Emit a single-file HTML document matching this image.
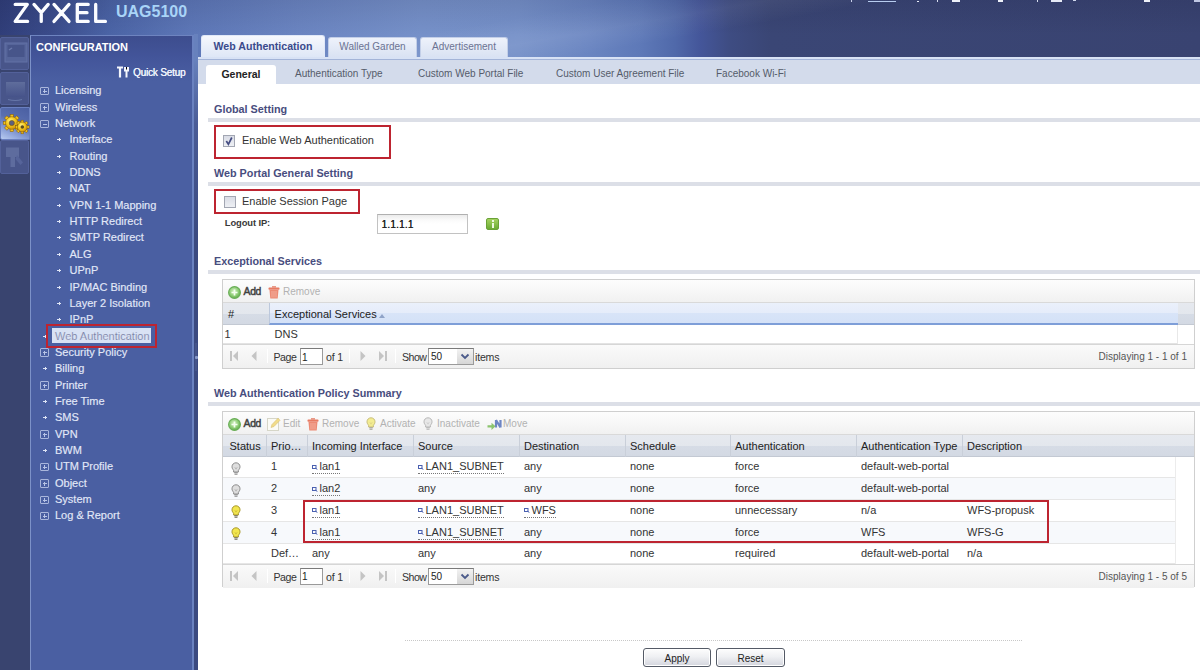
<!DOCTYPE html>
<html><head><meta charset="utf-8">
<style>
*{box-sizing:border-box}
html,body{margin:0;padding:0}
body{width:1200px;height:670px;overflow:hidden;position:relative;font-family:"Liberation Sans",sans-serif;background:#3a4572}
.a{position:absolute;white-space:nowrap}
.a svg{display:block}
#hdr{position:absolute;left:0;top:0;width:1200px;height:60px;background:linear-gradient(90deg,#303e79 0px,#3a4b8a 50px,#4b64a6 110px,#5d77b7 190px,#6b85c1 300px,#7691c9 420px,#7590c8 520px,#6a85c1 590px,#5e79b8 640px,#5069aa 675px,#44569a 700px,#3e4c82 730px,#3a4675 770px,#394371 1200px)}
#hdrs{position:absolute;left:0;top:0;width:1200px;height:60px;background:linear-gradient(180deg,rgba(10,10,40,0.10) 0px,rgba(10,10,40,0) 35px),linear-gradient(170deg,rgba(255,255,255,0) 40%,rgba(255,255,255,0.07) 50%,rgba(255,255,255,0) 58%)}
#logo{left:13px;top:-1px;color:#fff;font-size:26px;font-weight:bold;letter-spacing:3px}
#model{left:116px;top:3px;color:#a9d4f7;font-size:16px;font-weight:bold}
#strip{position:absolute;left:0;top:35px;width:30px;height:635px;background:#39446f}
.tile{position:absolute;left:0px;width:29px;height:33px;background:#48558a;border:1px solid #53619a;border-radius:2px}
#side{position:absolute;left:30px;top:35px;width:164px;height:635px;background:linear-gradient(#3d4d8e 0px,#43559a 22px,#4a5fa2 45px,#4a5fa2 100%);border-left:1px solid #7d92c8;border-top:1px solid #6e84c0;border-right:2px solid #6a82c0}
#sidebr{display:none}
#sidedk{position:absolute;left:194px;top:34px;width:4px;height:636px;background:linear-gradient(#6781bd 0px,#6781bd 25px,#4a5c96 90px,#3b4a80 200px,#3b4a80 100%)}
#cfg{left:36px;top:41px;color:#fff;font-size:11px;font-weight:bold}
.nav{position:absolute;left:0;color:#e2e8f8;font-size:11px;-webkit-text-stroke:0.15px #e2e8f8;white-space:nowrap;height:16px;line-height:16px}
.nav .bx{position:absolute;left:10px;top:4.5px;width:8.5px;height:8.5px;border:1px solid #a9b6dc;border-radius:1px}
.nav .bx:before{content:"";position:absolute;left:1.5px;top:3px;width:4px;height:1px;background:#b8c4e6}
.nav .bx.p:after{content:"";position:absolute;left:3px;top:1.5px;width:1px;height:4px;background:#b8c4e6}
.nav .dot{position:absolute;top:8px;width:4px;height:1px;background:#dfe5f6}
.nav .dot:after{content:"";position:absolute;left:2px;top:-1px;width:1px;height:3px;background:#dfe5f6}
#main{position:absolute;left:198px;top:57px;width:1002px;height:613px;background:#fff}
#subbar{position:absolute;left:198px;top:57px;width:1002px;height:27px;background:linear-gradient(#d8e2f5 0px,#d8e2f5 1.5px,#a3b4d8 1.5px,#a3b4d8 2.5px,#d3dbeb 2.5px)}
.tab{position:absolute;top:37px;height:20px;border-radius:3px 3px 0 0;background:linear-gradient(#eef2fb,#d9e2f3);border:1px solid #c3cfe8;border-bottom:none;font-size:10px;color:#6b7392;text-align:center;line-height:17px}
.tab.on{top:35px;height:23px;background:linear-gradient(#f6f8fd,#dde6f6);color:#3a4a8c;font-weight:bold;font-size:10.6px;border-color:#e0e8f8;line-height:20px}
.stab{position:absolute;top:74px;font-size:10px;color:#555b6a}
#gen{position:absolute;left:206px;top:64.5px;width:70px;height:19.5px;background:#fff;border-radius:3px 3px 0 0;font-size:10.5px;font-weight:bold;color:#222;text-align:center;line-height:19px}
.sec{position:absolute;left:214px;font-size:10.8px;font-weight:bold;color:#484d7e}
.div{position:absolute;left:208px;width:992px;height:4px;background:#dcdfe7}
.red{position:absolute;border:2.8px solid #bd2430}
.cb{position:absolute;width:12px;height:12px;border:1px solid #a2a6b2;background:linear-gradient(#d9dce6,#eef0f4)}
.t11{font-size:11px;color:#333}
.gp{position:absolute;border:1px solid #cfcfcf;background:#fff}
.tb{position:absolute;background:linear-gradient(#fdfdfd,#f1f1f1);border-bottom:1px solid #d9d9d9}
.hd{position:absolute;background:linear-gradient(#e6e9ef 0%,#e3e7ed 50%,#d6dce6 51%,#d3d9e3 100%);border-bottom:1px solid #c3c9d3}
.hdsort{position:absolute;background:linear-gradient(#eaf0fb 0%,#e5ecfa 50%,#d8e4f8 51%,#d4e1f7 100%);border-bottom:2px solid #7e9ed8;border-left:1px solid #bcc8dc}
.pg{position:absolute;background:linear-gradient(#fafafa,#f0f0f0);border-top:1px solid #d6d6d6}
.pin{position:absolute;border:1px solid #9a9a9a;background:#fff;border-top-color:#7a7a7a}
.psep{position:absolute;width:1px;height:14px;background:#d0d0d0;border-right:1px solid #fff}
.btn{position:absolute;border:1px solid #545a66;border-radius:3px;background:linear-gradient(#fdfdfd 0%,#eff0f3 45%,#d3d5dd 100%);font-size:10px;color:#222;text-align:center;line-height:19px;box-shadow:inset 0 0 0 1px #fff}
</style></head><body>
<div id="hdr"></div><div id="hdrs"></div>
<svg class="a" style="left:0;top:0" width="112" height="28" viewBox="0 0 112 28"><path d="M15.2 4.4H27.3L15.2 21.4H27.6M34 4.4L41.25 12.6L48.2 4.4M41.25 12.6V21.4M54 4.4L69 21.4M69 4.4L54 21.4M77.3 4.4V21.4M77.3 4.4H88.2M77.3 12.7H87M77.3 21.4H88.2M95.7 4.4V21.4H105.4" fill="none" stroke="#fbfcff" stroke-width="3.3" stroke-linecap="round" stroke-linejoin="round"/></svg>
<div class="a" id="model">UAG5100</div>

<div id="strip"></div>
<div class="a" style="left:851px;top:0;width:1px;height:2px;background:#c8d0ea"></div>
<div class="a" style="left:868px;top:1px;width:28px;height:1px;background:#b8cdf0"></div>
<div class="a" style="left:917px;top:1px;width:2px;height:1px;background:#e8ecf8"></div>
<div class="a" style="left:937px;top:0;width:1px;height:2px;background:#d8def0"></div>
<div class="a" style="left:952px;top:0;width:8px;height:2px;background:#eef1f9"></div>
<div class="a" style="left:998px;top:0;width:5px;height:2px;background:#eef1f9"></div>
<div class="a" style="left:1037px;top:0;width:1px;height:2px;background:#d8def0"></div>
<div class="a" style="left:1051px;top:0;width:11px;height:2px;background:#e6eaf6"></div>
<div class="a" style="left:1073px;top:0;width:3px;height:1px;background:#d0d8ee"></div>
<div class="a" style="left:1144px;top:0;width:6px;height:2px;background:#eef1f9"></div>
<div class="a" style="left:1194px;top:0;width:6px;height:2px;background:#c0c8e4"></div>
<div class="tile" style="top:37px"><svg width="28" height="33" viewBox="0 0 28 33" style="display:block"><rect x="4" y="5" width="22" height="19" fill="#56659a" stroke="#6272a6"/><rect x="6.5" y="7" width="17" height="12" fill="#47558a"/><path d="M8 12l3-2" stroke="#6a79ab" stroke-width="1.5"/></svg></div>
<div class="tile" style="top:72px"><svg width="28" height="33" viewBox="0 0 28 33" style="display:block"><defs><linearGradient id="tb2" x1="0" y1="0" x2="0" y2="1"><stop offset="0" stop-color="#5f6d9c"/><stop offset="1" stop-color="#46538a"/></linearGradient></defs><rect x="5" y="9" width="19" height="15" fill="url(#tb2)"/><path d="M7 26.5q7.5 2 14 0" stroke="#6676a8" stroke-width="1.2" fill="none"/></svg></div>
<div class="tile" style="top:107px;height:33px;width:30px;background:linear-gradient(25deg,#b8cbf0 0%,#8aa0d8 25%,#5a6fb0 55%,#4a5fa2 100%);border-radius:2px 0 0 2px;border-color:#6a80c0"><svg width="30" height="33" viewBox="0 0 30 33" style="display:block">
<defs><radialGradient id="gg" cx="40%" cy="35%" r="70%"><stop offset="0" stop-color="#fff48a"/><stop offset="0.5" stop-color="#f4c81c"/><stop offset="1" stop-color="#c98a0c"/></radialGradient></defs>
<g transform="translate(10.8,15)"><g fill="#f2c21c" stroke="#7a5208" stroke-width="0.5">
<rect x="-1.7" y="-8.6" width="3.4" height="3.6"/><rect x="-1.7" y="5" width="3.4" height="3.6"/><rect x="-8.6" y="-1.7" width="3.6" height="3.4"/><rect x="5" y="-1.7" width="3.6" height="3.4"/>
<g transform="rotate(45)"><rect x="-1.7" y="-8.6" width="3.4" height="3.6"/><rect x="-1.7" y="5" width="3.4" height="3.6"/><rect x="-8.6" y="-1.7" width="3.6" height="3.4"/><rect x="5" y="-1.7" width="3.6" height="3.4"/></g></g>
<circle r="6.3" fill="url(#gg)" stroke="#7a5208" stroke-width="0.5"/><circle r="2.6" fill="#5c6080" stroke="#7a5208" stroke-width="0.6"/></g>
<g transform="translate(21.3,19)"><g fill="#f2c21c" stroke="#7a5208" stroke-width="0.5">
<rect x="-1.3" y="-6.8" width="2.6" height="3"/><rect x="-1.3" y="3.8" width="2.6" height="3"/><rect x="-6.8" y="-1.3" width="3" height="2.6"/><rect x="3.8" y="-1.3" width="3" height="2.6"/>
<g transform="rotate(45)"><rect x="-1.3" y="-6.8" width="2.6" height="3"/><rect x="-1.3" y="3.8" width="2.6" height="3"/><rect x="-6.8" y="-1.3" width="3" height="2.6"/><rect x="3.8" y="-1.3" width="3" height="2.6"/></g></g>
<circle r="4.9" fill="url(#gg)" stroke="#7a5208" stroke-width="0.5"/><circle r="1.8" fill="#5a4a20"/></g>
</svg></div>
<div class="tile" style="top:140px;height:34px"><svg width="28" height="34" viewBox="0 0 28 34" style="display:block"><path d="M5 6.5h13v9.5h-4v10h-4.5v-10H5z" fill="#5e6c9e"/><path d="M16 14l6 7.5-2.5 2.5-5-6z" fill="#56649a"/></svg></div>
<div id="side"></div>
<div id="sidebr"></div>
<div id="sidedk"></div>
<div class="a" style="left:195px;top:343px;width:2px;height:28px;background:#45548a"></div>
<div class="a" style="left:195px;top:356px;width:2.5px;height:3px;border-radius:1px;background:#8a9ccc"></div>
<div class="a" id="cfg">CONFIGURATION</div>
<svg class="a" style="left:116px;top:66px" width="14" height="13" viewBox="0 0 14 13"><path d="M1 1.5h6M4 1.5v10" stroke="#f4f6fc" stroke-width="2.2"/><path d="M9 1v3.5h3V1M10.5 4.5v7" stroke="#f4f6fc" stroke-width="2"/></svg>
<div class="a" style="left:133px;top:67.5px;color:#eef2fb;font-size:10px;line-height:1;letter-spacing:-0.2px;text-shadow:0.35px 0 0 #eef2fb">Quick Setup</div>

<div class="nav" style="left:30px;top:82.30px;width:160px"><span style="position:absolute;left:25px;">Licensing</span><span class="bx p"></span></div>
<div class="nav" style="left:30px;top:98.65px;width:160px"><span style="position:absolute;left:25px;">Wireless</span><span class="bx p"></span></div>
<div class="nav" style="left:30px;top:115.00px;width:160px"><span style="position:absolute;left:25px;">Network</span><span class="bx "></span></div>
<div class="nav" style="left:30px;top:131.35px;width:160px"><span style="position:absolute;left:39.5px;">Interface</span><span class="dot" style="left:27px"></span></div>
<div class="nav" style="left:30px;top:147.70px;width:160px"><span style="position:absolute;left:39.5px;">Routing</span><span class="dot" style="left:27px"></span></div>
<div class="nav" style="left:30px;top:164.05px;width:160px"><span style="position:absolute;left:39.5px;">DDNS</span><span class="dot" style="left:27px"></span></div>
<div class="nav" style="left:30px;top:180.40px;width:160px"><span style="position:absolute;left:39.5px;">NAT</span><span class="dot" style="left:27px"></span></div>
<div class="nav" style="left:30px;top:196.75px;width:160px"><span style="position:absolute;left:39.5px;">VPN 1-1 Mapping</span><span class="dot" style="left:27px"></span></div>
<div class="nav" style="left:30px;top:213.10px;width:160px"><span style="position:absolute;left:39.5px;">HTTP Redirect</span><span class="dot" style="left:27px"></span></div>
<div class="nav" style="left:30px;top:229.45px;width:160px"><span style="position:absolute;left:39.5px;">SMTP Redirect</span><span class="dot" style="left:27px"></span></div>
<div class="nav" style="left:30px;top:245.80px;width:160px"><span style="position:absolute;left:39.5px;">ALG</span><span class="dot" style="left:27px"></span></div>
<div class="nav" style="left:30px;top:262.15px;width:160px"><span style="position:absolute;left:39.5px;">UPnP</span><span class="dot" style="left:27px"></span></div>
<div class="nav" style="left:30px;top:278.50px;width:160px"><span style="position:absolute;left:39.5px;">IP/MAC Binding</span><span class="dot" style="left:27px"></span></div>
<div class="nav" style="left:30px;top:294.85px;width:160px"><span style="position:absolute;left:39.5px;">Layer 2 Isolation</span><span class="dot" style="left:27px"></span></div>
<div class="nav" style="left:30px;top:311.20px;width:160px"><span style="position:absolute;left:39.5px;">IPnP</span><span class="dot" style="left:27px"></span></div>
<div class="a" style="left:51.6px;top:327.85px;width:99px;height:15px;background:#d9e2f4"></div>
<div class="nav" style="left:30px;top:327.55px;width:160px"><span style="position:absolute;left:25px;color:#7880a4;">Web Authentication</span><span class="dot" style="left:13px"></span></div>
<div class="nav" style="left:30px;top:343.90px;width:160px"><span style="position:absolute;left:25px;">Security Policy</span><span class="bx p"></span></div>
<div class="nav" style="left:30px;top:360.25px;width:160px"><span style="position:absolute;left:25px;">Billing</span><span class="dot" style="left:13px"></span></div>
<div class="nav" style="left:30px;top:376.60px;width:160px"><span style="position:absolute;left:25px;">Printer</span><span class="bx p"></span></div>
<div class="nav" style="left:30px;top:392.95px;width:160px"><span style="position:absolute;left:25px;">Free Time</span><span class="dot" style="left:13px"></span></div>
<div class="nav" style="left:30px;top:409.30px;width:160px"><span style="position:absolute;left:25px;">SMS</span><span class="dot" style="left:13px"></span></div>
<div class="nav" style="left:30px;top:425.65px;width:160px"><span style="position:absolute;left:25px;">VPN</span><span class="bx p"></span></div>
<div class="nav" style="left:30px;top:442.00px;width:160px"><span style="position:absolute;left:25px;">BWM</span><span class="dot" style="left:13px"></span></div>
<div class="nav" style="left:30px;top:458.35px;width:160px"><span style="position:absolute;left:25px;">UTM Profile</span><span class="bx p"></span></div>
<div class="nav" style="left:30px;top:474.70px;width:160px"><span style="position:absolute;left:25px;">Object</span><span class="bx p"></span></div>
<div class="nav" style="left:30px;top:491.05px;width:160px"><span style="position:absolute;left:25px;">System</span><span class="bx p"></span></div>
<div class="nav" style="left:30px;top:507.40px;width:160px"><span style="position:absolute;left:25px;">Log &amp; Report</span><span class="bx p"></span></div>

<div class="red" style="left:46px;top:324px;width:111px;height:24px"></div>

<div id="main"></div>
<div class="tab on" style="left:201px;width:124px">Web Authentication</div>
<div class="tab" style="left:328px;width:89px">Walled Garden</div>
<div class="tab" style="left:420px;width:88px">Advertisement</div>
<div id="subbar"></div>
<div id="gen">General</div>
<div class="stab" style="left:295px;top:68px">Authentication Type</div>
<div class="stab" style="left:418px;top:68px">Custom Web Portal File</div>
<div class="stab" style="left:556px;top:68px">Custom User Agreement File</div>
<div class="stab" style="left:716px;top:68px">Facebook Wi-Fi</div>

<div class="sec" style="top:103px">Global Setting</div>
<div class="div" style="top:117.5px"></div>
<div class="red" style="left:214px;top:124.5px;width:177px;height:34.5px"></div>
<div class="cb" style="left:223px;top:135px"></div><svg class="a" style="left:223px;top:135px" width="12" height="12" viewBox="0 0 12 12"><path d="M3.3 6l2.1 3.3 3.4-6.8" fill="none" stroke="#454d82" stroke-width="1.7"/></svg>
<div class="a t11" style="left:242px;top:134px">Enable Web Authentication</div>

<div class="sec" style="top:167px">Web Portal General Setting</div>
<div class="div" style="top:182px"></div>
<div class="red" style="left:214px;top:189px;width:146px;height:25px"></div>
<div class="cb" style="left:224px;top:196px"></div>
<div class="a t11" style="left:242px;top:195px">Enable Session Page</div>
<div class="a" style="left:224.8px;top:217.6px;font-size:9.4px;line-height:1;font-weight:bold;color:#3a3a3a;letter-spacing:-0.1px">Logout IP:</div>

<div class="sec" style="top:255px">Exceptional Services</div>
<div class="div" style="top:270px"></div>

<div class="sec" style="top:387px">Web Authentication Policy Summary</div>
<div class="div" style="top:402px"></div>


<!-- Logout IP input & info -->
<div class="a" style="left:377px;top:214px;width:91px;height:20px;border:1px solid #c2c2c2;border-top-color:#b0b0b0;background:linear-gradient(#ebebeb 0px,#fafafa 5px,#fff 9px)"></div>
<div class="a" style="left:381.5px;top:219.5px;font-size:10px;line-height:1;color:#222;text-shadow:0.3px 0 0 #222;letter-spacing:0.2px">1.1.1.1</div>
<div class="a" style="left:486px;top:218px;width:13px;height:12px;border-radius:2px;background:linear-gradient(#a4d260,#6cab34);border:1px solid #6aa236"></div>
<div class="a" style="left:491.5px;top:220px;width:2px;height:2px;background:#eef8e0"></div>
<div class="a" style="left:491.5px;top:223px;width:2px;height:5px;background:#eef8e0"></div>
<!-- dotted line & buttons -->
<div class="a" style="left:405px;top:640px;width:617px;height:0;border-top:1px dotted #c8c8c8"></div>
<div class="btn" style="left:643px;top:648px;width:68px;height:19px">Apply</div>
<div class="btn" style="left:716px;top:648px;width:69px;height:19px">Reset</div>
<div class="gp" style="left:222px;top:279px;width:973px;height:90px"></div>
<div class="tb" style="left:223px;top:280px;width:971px;height:23px"></div>
<div class="a" style="left:228px;top:286px"><svg width="13" height="13" viewBox="0 0 13 13"><defs><radialGradient id="ga" cx="45%" cy="40%" r="65%"><stop offset="0" stop-color="#d4f0c4"/><stop offset="0.6" stop-color="#8ccc74"/><stop offset="1" stop-color="#58a444"/></radialGradient></defs><circle cx="6.5" cy="6.5" r="5.9" fill="url(#ga)" stroke="#6aae58" stroke-width="1.1"/><path d="M6.5 3.5v6M3.5 6.5h6" stroke="#f4fff0" stroke-width="1.7"/></svg></div>
<div class="a" style="left:243.5px;top:287.00px;font-size:10.4px;line-height:1;color:#404040;-webkit-text-stroke:0.45px #404040;letter-spacing:-0.3px">Add</div>
<div class="a" style="left:268px;top:286px"><svg width="12" height="13" viewBox="0 0 12 13"><rect x="0.5" y="1.5" width="11" height="2.2" rx="0.8" fill="#e77a62"/><rect x="4" y="0" width="4" height="2" fill="#e99a88"/><path d="M1.5 4h9l-0.8 8.5h-7.4z" fill="#ec8a74"/><path d="M4 5v6.5M6 5v6.5M8 5v6.5" stroke="#f6b8a8" stroke-width="0.8"/></svg></div>
<div class="a" style="left:283px;top:287.34px;font-size:10px;line-height:1;color:#b2b2b2;">Remove</div>
<div class="hd" style="left:223px;top:303px;width:46px;height:22px"></div>
<div class="hdsort" style="left:269px;top:303px;width:909px;height:22px"></div>
<div class="hd" style="left:1178px;top:303px;width:16px;height:22px"></div>
<div class="a" style="left:228px;top:308.79px;font-size:11px;line-height:1;color:#222;">#</div>
<div class="a" style="left:274.6px;top:309.49px;font-size:11px;line-height:1;color:#222;">Exceptional Services</div>
<div class="a" style="left:379px;top:314px;width:0;height:0;border-left:3px solid transparent;border-right:3px solid transparent;border-bottom:4px solid #8fa3c8"></div>
<div class="a" style="left:223px;top:325px;width:955px;height:19px;background:#fff;border-bottom:1px solid #e3e3e3"></div>
<div class="a" style="left:1177px;top:325px;width:1px;height:19px;background:#e8e8e8"></div>
<div class="a" style="left:224.5px;top:328.99px;font-size:11px;line-height:1;color:#333;">1</div>
<div class="a" style="left:274.6px;top:328.99px;font-size:11px;line-height:1;color:#333;">DNS</div>
<div class="pg" style="left:223px;top:344px;width:971px;height:24px"></div>
<div class="a" style="left:230px;top:350px;line-height:0"><svg width="9" height="12" viewBox="0 0 9 12"><rect x="0" y="1" width="2" height="10" fill="#c4c4c4"/><path d="M8 1v10L3 6z" fill="#c4c4c4"/></svg></div>
<div class="a" style="left:251px;top:351px;line-height:0"><svg width="6" height="10" viewBox="0 0 6 10"><path d="M5.5 0v10L0.5 5z" fill="#c4c4c4"/></svg></div>
<div class="psep" style="left:267px;top:349px"></div>
<div class="a" style="left:273.5px;top:352.13px;font-size:10.6px;line-height:1;color:#333;letter-spacing:-0.45px">Page</div>
<div class="pin" style="left:300px;top:348px;width:23px;height:17px"></div>
<div class="a" style="left:302px;top:352.64px;font-size:10px;line-height:1;color:#222;">1</div>
<div class="a" style="left:326px;top:352.13px;font-size:10.6px;line-height:1;color:#333;letter-spacing:-0.2px">of 1</div>
<div class="psep" style="left:349px;top:349px"></div>
<div class="a" style="left:360px;top:351px;line-height:0"><svg width="6" height="10" viewBox="0 0 6 10"><path d="M0.5 0v10L5.5 5z" fill="#c4c4c4"/></svg></div>
<div class="a" style="left:378px;top:350px;line-height:0"><svg width="9" height="12" viewBox="0 0 9 12"><rect x="7" y="1" width="2" height="10" fill="#c4c4c4"/><path d="M1 1v10L6 6z" fill="#c4c4c4"/></svg></div>
<div class="psep" style="left:395px;top:349px"></div>
<div class="a" style="left:402px;top:352.13px;font-size:10.6px;line-height:1;color:#333;letter-spacing:-0.5px">Show</div>
<div class="pin" style="left:428px;top:348px;width:46px;height:17px"></div>
<div class="a" style="left:457px;top:349px;line-height:0"><svg width="16" height="15" viewBox="0 0 16 15"><defs><linearGradient id="gs" x1="0" y1="0" x2="0" y2="1"><stop offset="0" stop-color="#f2f2f2"/><stop offset="1" stop-color="#d6d6d6"/></linearGradient></defs><rect x="0" y="0" width="16" height="15" fill="url(#gs)"/><path d="M4.5 5.5l3.5 3.5 3.5-3.5" fill="none" stroke="#4a5a8a" stroke-width="1.8"/></svg></div>
<div class="a" style="left:431px;top:352.14px;font-size:10px;line-height:1;color:#222;">50</div>
<div class="a" style="left:475px;top:352.13px;font-size:10.6px;line-height:1;color:#333;letter-spacing:-0.2px">items</div>
<div class="a" style="right:13px;top:352.14px;font-size:10px;line-height:1;color:#555">Displaying 1 - 1 of 1</div>
<div class="gp" style="left:222px;top:411px;width:973px;height:176px"></div>
<div class="tb" style="left:223px;top:412px;width:971px;height:23px"></div>
<div class="a" style="left:228px;top:418px"><svg width="13" height="13" viewBox="0 0 13 13"><defs><radialGradient id="ga" cx="45%" cy="40%" r="65%"><stop offset="0" stop-color="#d4f0c4"/><stop offset="0.6" stop-color="#8ccc74"/><stop offset="1" stop-color="#58a444"/></radialGradient></defs><circle cx="6.5" cy="6.5" r="5.9" fill="url(#ga)" stroke="#6aae58" stroke-width="1.1"/><path d="M6.5 3.5v6M3.5 6.5h6" stroke="#f4fff0" stroke-width="1.7"/></svg></div>
<div class="a" style="left:243.5px;top:418.60px;font-size:10.4px;line-height:1;color:#404040;-webkit-text-stroke:0.45px #404040;letter-spacing:-0.3px">Add</div>
<div class="a" style="left:267px;top:417px"><svg width="14" height="14" viewBox="0 0 14 14"><rect x="0.5" y="1.5" width="11" height="12" fill="#fbfbf6" stroke="#d6d6c8"/><path d="M4 10.5l1-3 6-6.2 2 2-6 6.2z" fill="#f1dc8a" stroke="#d8c070" stroke-width="0.6"/></svg></div>
<div class="a" style="left:283px;top:418.94px;font-size:10px;line-height:1;color:#b2b2b2;">Edit</div>
<div class="a" style="left:307px;top:418px"><svg width="12" height="13" viewBox="0 0 12 13"><rect x="0.5" y="1.5" width="11" height="2.2" rx="0.8" fill="#e77a62"/><rect x="4" y="0" width="4" height="2" fill="#e99a88"/><path d="M1.5 4h9l-0.8 8.5h-7.4z" fill="#ec8a74"/><path d="M4 5v6.5M6 5v6.5M8 5v6.5" stroke="#f6b8a8" stroke-width="0.8"/></svg></div>
<div class="a" style="left:322px;top:418.94px;font-size:10px;line-height:1;color:#b2b2b2;">Remove</div>
<div class="a" style="left:366px;top:417px;opacity:.6"><svg width="10" height="13" viewBox="0 0 10 13"><path d="M5 0.8C2.6 0.8 1 2.6 1 4.8c0 1.6 0.9 2.5 1.6 3.5v1.7h4.8V8.3C8.1 7.3 9 6.4 9 4.8 9 2.6 7.4 0.8 5 0.8z" fill="#f2e64e" stroke="#a89628" stroke-width="1"/><path d="M3.2 10.8h3.6M3.5 12.2h3" stroke="#6e6a58" stroke-width="1.1"/><path d="M3.8 5.2l1.2 2 1.2-2" fill="none" stroke="#c8b838" stroke-width="0.7"/></svg></div>
<div class="a" style="left:380px;top:418.94px;font-size:10px;line-height:1;color:#b2b2b2;">Activate</div>
<div class="a" style="left:423px;top:417px;opacity:.6"><svg width="10" height="13" viewBox="0 0 10 13"><path d="M5 0.8C2.6 0.8 1 2.6 1 4.8c0 1.6 0.9 2.5 1.6 3.5v1.7h4.8V8.3C8.1 7.3 9 6.4 9 4.8 9 2.6 7.4 0.8 5 0.8z" fill="#dedede" stroke="#8c8c8c" stroke-width="1"/><path d="M3.2 10.8h3.6M3.5 12.2h3" stroke="#8a8a8a" stroke-width="1.1"/><path d="M3.8 5.2l1.2 2 1.2-2" fill="none" stroke="#a8a8a8" stroke-width="0.7"/></svg></div>
<div class="a" style="left:437px;top:418.94px;font-size:10px;line-height:1;color:#b2b2b2;">Inactivate</div>
<div class="a" style="left:487px;top:419px"><svg width="16" height="12" viewBox="0 0 16 12"><path d="M9 1v7.5M9 1l4.5 7.5M13.5 1v7.5" stroke="#6d85c4" stroke-width="2.2" fill="none"/><path d="M0.5 6.2h4V3.8l4 3.5-4 3.7V8.6h-4z" fill="#8cc46e"/></svg></div>
<div class="a" style="left:503px;top:418.94px;font-size:10px;line-height:1;color:#b2b2b2;">Move</div>
<div class="hd" style="left:223px;top:435px;width:971px;height:21.5px"></div>
<div class="a" style="left:266px;top:435px;width:1px;height:21.5px;background:#c9cfd9"></div>
<div class="a" style="left:307px;top:435px;width:1px;height:21.5px;background:#c9cfd9"></div>
<div class="a" style="left:413px;top:435px;width:1px;height:21.5px;background:#c9cfd9"></div>
<div class="a" style="left:519px;top:435px;width:1px;height:21.5px;background:#c9cfd9"></div>
<div class="a" style="left:625px;top:435px;width:1px;height:21.5px;background:#c9cfd9"></div>
<div class="a" style="left:730px;top:435px;width:1px;height:21.5px;background:#c9cfd9"></div>
<div class="a" style="left:856px;top:435px;width:1px;height:21.5px;background:#c9cfd9"></div>
<div class="a" style="left:962px;top:435px;width:1px;height:21.5px;background:#c9cfd9"></div>
<div class="a" style="left:229.5px;top:440.99px;font-size:11px;line-height:1;color:#222;">Status</div>
<div class="a" style="left:271px;top:440.99px;font-size:11px;line-height:1;color:#222;">Prio…</div>
<div class="a" style="left:312px;top:440.99px;font-size:11px;line-height:1;color:#222;">Incoming Interface</div>
<div class="a" style="left:418px;top:440.99px;font-size:11px;line-height:1;color:#222;">Source</div>
<div class="a" style="left:524px;top:440.99px;font-size:11px;line-height:1;color:#222;">Destination</div>
<div class="a" style="left:630px;top:440.99px;font-size:11px;line-height:1;color:#222;">Schedule</div>
<div class="a" style="left:735px;top:440.99px;font-size:11px;line-height:1;color:#222;">Authentication</div>
<div class="a" style="left:861px;top:440.99px;font-size:11px;line-height:1;color:#222;">Authentication Type</div>
<div class="a" style="left:967px;top:440.99px;font-size:11px;line-height:1;color:#222;">Description</div>
<div class="a" style="left:223px;top:456.50px;width:952px;height:21.75px;background:#fff;border-bottom:1px solid #e6e6e6"></div>
<div class="a" style="left:231px;top:461.80px"><svg width="10" height="13" viewBox="0 0 10 13"><path d="M5 0.8C2.6 0.8 1 2.6 1 4.8c0 1.6 0.9 2.5 1.6 3.5v1.7h4.8V8.3C8.1 7.3 9 6.4 9 4.8 9 2.6 7.4 0.8 5 0.8z" fill="#dedede" stroke="#8c8c8c" stroke-width="1"/><path d="M3.2 10.8h3.6M3.5 12.2h3" stroke="#8a8a8a" stroke-width="1.1"/><path d="M3.8 5.2l1.2 2 1.2-2" fill="none" stroke="#a8a8a8" stroke-width="0.7"/></svg></div>
<div class="a" style="left:271px;top:461.19px;font-size:11px;line-height:1;color:#333;">1</div>
<div class="a" style="left:312px;top:464.80px;line-height:0"><svg width="6" height="5" viewBox="0 0 6 5"><rect x="0.5" y="0.5" width="3.5" height="3" fill="none" stroke="#4a60b0" stroke-width="1"/><path d="M3.5 3l2 1.8" stroke="#4a60b0" stroke-width="1"/></svg></div>
<div class="a" style="left:319.5px;top:461.19px;font-size:11px;line-height:1;color:#333;border-bottom:1px dotted #777;padding-bottom:1px;margin-left:-7.5px;padding-left:7.5px">lan1</div>
<div class="a" style="left:418px;top:464.80px;line-height:0"><svg width="6" height="5" viewBox="0 0 6 5"><rect x="0.5" y="0.5" width="3.5" height="3" fill="none" stroke="#4a60b0" stroke-width="1"/><path d="M3.5 3l2 1.8" stroke="#4a60b0" stroke-width="1"/></svg></div>
<div class="a" style="left:425.5px;top:461.19px;font-size:11px;line-height:1;color:#333;border-bottom:1px dotted #777;padding-bottom:1px;margin-left:-7.5px;padding-left:7.5px">LAN1_SUBNET</div>
<div class="a" style="left:524px;top:461.19px;font-size:11px;line-height:1;color:#333;">any</div>
<div class="a" style="left:630px;top:461.19px;font-size:11px;line-height:1;color:#333;">none</div>
<div class="a" style="left:735px;top:461.19px;font-size:11px;line-height:1;color:#333;">force</div>
<div class="a" style="left:861px;top:461.19px;font-size:11px;line-height:1;color:#333;">default-web-portal</div>
<div class="a" style="left:223px;top:478.25px;width:952px;height:21.75px;background:#f7f9fc;border-bottom:1px solid #e6e6e6"></div>
<div class="a" style="left:231px;top:483.55px"><svg width="10" height="13" viewBox="0 0 10 13"><path d="M5 0.8C2.6 0.8 1 2.6 1 4.8c0 1.6 0.9 2.5 1.6 3.5v1.7h4.8V8.3C8.1 7.3 9 6.4 9 4.8 9 2.6 7.4 0.8 5 0.8z" fill="#dedede" stroke="#8c8c8c" stroke-width="1"/><path d="M3.2 10.8h3.6M3.5 12.2h3" stroke="#8a8a8a" stroke-width="1.1"/><path d="M3.8 5.2l1.2 2 1.2-2" fill="none" stroke="#a8a8a8" stroke-width="0.7"/></svg></div>
<div class="a" style="left:271px;top:482.99px;font-size:11px;line-height:1;color:#333;">2</div>
<div class="a" style="left:312px;top:486.60px;line-height:0"><svg width="6" height="5" viewBox="0 0 6 5"><rect x="0.5" y="0.5" width="3.5" height="3" fill="none" stroke="#4a60b0" stroke-width="1"/><path d="M3.5 3l2 1.8" stroke="#4a60b0" stroke-width="1"/></svg></div>
<div class="a" style="left:319.5px;top:482.99px;font-size:11px;line-height:1;color:#333;border-bottom:1px dotted #777;padding-bottom:1px;margin-left:-7.5px;padding-left:7.5px">lan2</div>
<div class="a" style="left:418px;top:482.99px;font-size:11px;line-height:1;color:#333;">any</div>
<div class="a" style="left:524px;top:482.99px;font-size:11px;line-height:1;color:#333;">any</div>
<div class="a" style="left:630px;top:482.99px;font-size:11px;line-height:1;color:#333;">none</div>
<div class="a" style="left:735px;top:482.99px;font-size:11px;line-height:1;color:#333;">force</div>
<div class="a" style="left:861px;top:482.99px;font-size:11px;line-height:1;color:#333;">default-web-portal</div>
<div class="a" style="left:223px;top:500.00px;width:952px;height:21.75px;background:#fff;border-bottom:1px solid #e6e6e6"></div>
<div class="a" style="left:231px;top:505.30px"><svg width="10" height="13" viewBox="0 0 10 13"><path d="M5 0.8C2.6 0.8 1 2.6 1 4.8c0 1.6 0.9 2.5 1.6 3.5v1.7h4.8V8.3C8.1 7.3 9 6.4 9 4.8 9 2.6 7.4 0.8 5 0.8z" fill="#f2e64e" stroke="#a89628" stroke-width="1"/><path d="M3.2 10.8h3.6M3.5 12.2h3" stroke="#6e6a58" stroke-width="1.1"/><path d="M3.8 5.2l1.2 2 1.2-2" fill="none" stroke="#c8b838" stroke-width="0.7"/></svg></div>
<div class="a" style="left:271px;top:504.79px;font-size:11px;line-height:1;color:#333;">3</div>
<div class="a" style="left:312px;top:508.40px;line-height:0"><svg width="6" height="5" viewBox="0 0 6 5"><rect x="0.5" y="0.5" width="3.5" height="3" fill="none" stroke="#4a60b0" stroke-width="1"/><path d="M3.5 3l2 1.8" stroke="#4a60b0" stroke-width="1"/></svg></div>
<div class="a" style="left:319.5px;top:504.79px;font-size:11px;line-height:1;color:#333;border-bottom:1px dotted #777;padding-bottom:1px;margin-left:-7.5px;padding-left:7.5px">lan1</div>
<div class="a" style="left:418px;top:508.40px;line-height:0"><svg width="6" height="5" viewBox="0 0 6 5"><rect x="0.5" y="0.5" width="3.5" height="3" fill="none" stroke="#4a60b0" stroke-width="1"/><path d="M3.5 3l2 1.8" stroke="#4a60b0" stroke-width="1"/></svg></div>
<div class="a" style="left:425.5px;top:504.79px;font-size:11px;line-height:1;color:#333;border-bottom:1px dotted #777;padding-bottom:1px;margin-left:-7.5px;padding-left:7.5px">LAN1_SUBNET</div>
<div class="a" style="left:524px;top:508.40px;line-height:0"><svg width="6" height="5" viewBox="0 0 6 5"><rect x="0.5" y="0.5" width="3.5" height="3" fill="none" stroke="#4a60b0" stroke-width="1"/><path d="M3.5 3l2 1.8" stroke="#4a60b0" stroke-width="1"/></svg></div>
<div class="a" style="left:531.5px;top:504.79px;font-size:11px;line-height:1;color:#333;border-bottom:1px dotted #777;padding-bottom:1px;margin-left:-7.5px;padding-left:7.5px">WFS</div>
<div class="a" style="left:630px;top:504.79px;font-size:11px;line-height:1;color:#333;">none</div>
<div class="a" style="left:735px;top:504.79px;font-size:11px;line-height:1;color:#333;">unnecessary</div>
<div class="a" style="left:861px;top:504.79px;font-size:11px;line-height:1;color:#333;">n/a</div>
<div class="a" style="left:967px;top:504.79px;font-size:11px;line-height:1;color:#333;">WFS-propusk</div>
<div class="a" style="left:223px;top:521.75px;width:952px;height:21.75px;background:#f7f9fc;border-bottom:1px solid #e6e6e6"></div>
<div class="a" style="left:231px;top:527.05px"><svg width="10" height="13" viewBox="0 0 10 13"><path d="M5 0.8C2.6 0.8 1 2.6 1 4.8c0 1.6 0.9 2.5 1.6 3.5v1.7h4.8V8.3C8.1 7.3 9 6.4 9 4.8 9 2.6 7.4 0.8 5 0.8z" fill="#f2e64e" stroke="#a89628" stroke-width="1"/><path d="M3.2 10.8h3.6M3.5 12.2h3" stroke="#6e6a58" stroke-width="1.1"/><path d="M3.8 5.2l1.2 2 1.2-2" fill="none" stroke="#c8b838" stroke-width="0.7"/></svg></div>
<div class="a" style="left:271px;top:526.59px;font-size:11px;line-height:1;color:#333;">4</div>
<div class="a" style="left:312px;top:530.20px;line-height:0"><svg width="6" height="5" viewBox="0 0 6 5"><rect x="0.5" y="0.5" width="3.5" height="3" fill="none" stroke="#4a60b0" stroke-width="1"/><path d="M3.5 3l2 1.8" stroke="#4a60b0" stroke-width="1"/></svg></div>
<div class="a" style="left:319.5px;top:526.59px;font-size:11px;line-height:1;color:#333;border-bottom:1px dotted #777;padding-bottom:1px;margin-left:-7.5px;padding-left:7.5px">lan1</div>
<div class="a" style="left:418px;top:530.20px;line-height:0"><svg width="6" height="5" viewBox="0 0 6 5"><rect x="0.5" y="0.5" width="3.5" height="3" fill="none" stroke="#4a60b0" stroke-width="1"/><path d="M3.5 3l2 1.8" stroke="#4a60b0" stroke-width="1"/></svg></div>
<div class="a" style="left:425.5px;top:526.59px;font-size:11px;line-height:1;color:#333;border-bottom:1px dotted #777;padding-bottom:1px;margin-left:-7.5px;padding-left:7.5px">LAN1_SUBNET</div>
<div class="a" style="left:524px;top:526.59px;font-size:11px;line-height:1;color:#333;">any</div>
<div class="a" style="left:630px;top:526.59px;font-size:11px;line-height:1;color:#333;">none</div>
<div class="a" style="left:735px;top:526.59px;font-size:11px;line-height:1;color:#333;">force</div>
<div class="a" style="left:861px;top:526.59px;font-size:11px;line-height:1;color:#333;">WFS</div>
<div class="a" style="left:967px;top:526.59px;font-size:11px;line-height:1;color:#333;">WFS-G</div>
<div class="a" style="left:223px;top:543.50px;width:952px;height:20.80px;background:#fff;border-bottom:1px solid #e6e6e6"></div>
<div class="a" style="left:271px;top:548.39px;font-size:11px;line-height:1;color:#333;">Def…</div>
<div class="a" style="left:312px;top:548.39px;font-size:11px;line-height:1;color:#333;">any</div>
<div class="a" style="left:418px;top:548.39px;font-size:11px;line-height:1;color:#333;">any</div>
<div class="a" style="left:524px;top:548.39px;font-size:11px;line-height:1;color:#333;">any</div>
<div class="a" style="left:630px;top:548.39px;font-size:11px;line-height:1;color:#333;">none</div>
<div class="a" style="left:735px;top:548.39px;font-size:11px;line-height:1;color:#333;">required</div>
<div class="a" style="left:861px;top:548.39px;font-size:11px;line-height:1;color:#333;">default-web-portal</div>
<div class="a" style="left:967px;top:548.39px;font-size:11px;line-height:1;color:#333;">n/a</div>
<div class="a" style="left:1175px;top:456.5px;width:1px;height:108px;background:#ececec"></div>
<div class="pg" style="left:223px;top:564px;width:971px;height:24px"></div>
<div class="a" style="left:230px;top:570px;line-height:0"><svg width="9" height="12" viewBox="0 0 9 12"><rect x="0" y="1" width="2" height="10" fill="#c4c4c4"/><path d="M8 1v10L3 6z" fill="#c4c4c4"/></svg></div>
<div class="a" style="left:251px;top:571px;line-height:0"><svg width="6" height="10" viewBox="0 0 6 10"><path d="M5.5 0v10L0.5 5z" fill="#c4c4c4"/></svg></div>
<div class="psep" style="left:267px;top:569px"></div>
<div class="a" style="left:273.5px;top:571.53px;font-size:10.6px;line-height:1;color:#333;letter-spacing:-0.45px">Page</div>
<div class="pin" style="left:300px;top:568px;width:23px;height:17px"></div>
<div class="a" style="left:302px;top:572.03px;font-size:10px;line-height:1;color:#222;">1</div>
<div class="a" style="left:326px;top:571.53px;font-size:10.6px;line-height:1;color:#333;letter-spacing:-0.2px">of 1</div>
<div class="psep" style="left:349px;top:569px"></div>
<div class="a" style="left:360px;top:571px;line-height:0"><svg width="6" height="10" viewBox="0 0 6 10"><path d="M0.5 0v10L5.5 5z" fill="#c4c4c4"/></svg></div>
<div class="a" style="left:378px;top:570px;line-height:0"><svg width="9" height="12" viewBox="0 0 9 12"><rect x="7" y="1" width="2" height="10" fill="#c4c4c4"/><path d="M1 1v10L6 6z" fill="#c4c4c4"/></svg></div>
<div class="psep" style="left:395px;top:569px"></div>
<div class="a" style="left:402px;top:571.53px;font-size:10.6px;line-height:1;color:#333;letter-spacing:-0.5px">Show</div>
<div class="pin" style="left:428px;top:568px;width:46px;height:17px"></div>
<div class="a" style="left:457px;top:569px;line-height:0"><svg width="16" height="15" viewBox="0 0 16 15"><defs><linearGradient id="gs" x1="0" y1="0" x2="0" y2="1"><stop offset="0" stop-color="#f2f2f2"/><stop offset="1" stop-color="#d6d6d6"/></linearGradient></defs><rect x="0" y="0" width="16" height="15" fill="url(#gs)"/><path d="M4.5 5.5l3.5 3.5 3.5-3.5" fill="none" stroke="#4a5a8a" stroke-width="1.8"/></svg></div>
<div class="a" style="left:431px;top:571.53px;font-size:10px;line-height:1;color:#222;">50</div>
<div class="a" style="left:475px;top:571.53px;font-size:10.6px;line-height:1;color:#333;letter-spacing:-0.2px">items</div>
<div class="a" style="right:13px;top:571.53px;font-size:10px;line-height:1;color:#555">Displaying 1 - 5 of 5</div>
<div class="red" style="left:303px;top:500px;width:746px;height:43px"></div>

</body></html>
